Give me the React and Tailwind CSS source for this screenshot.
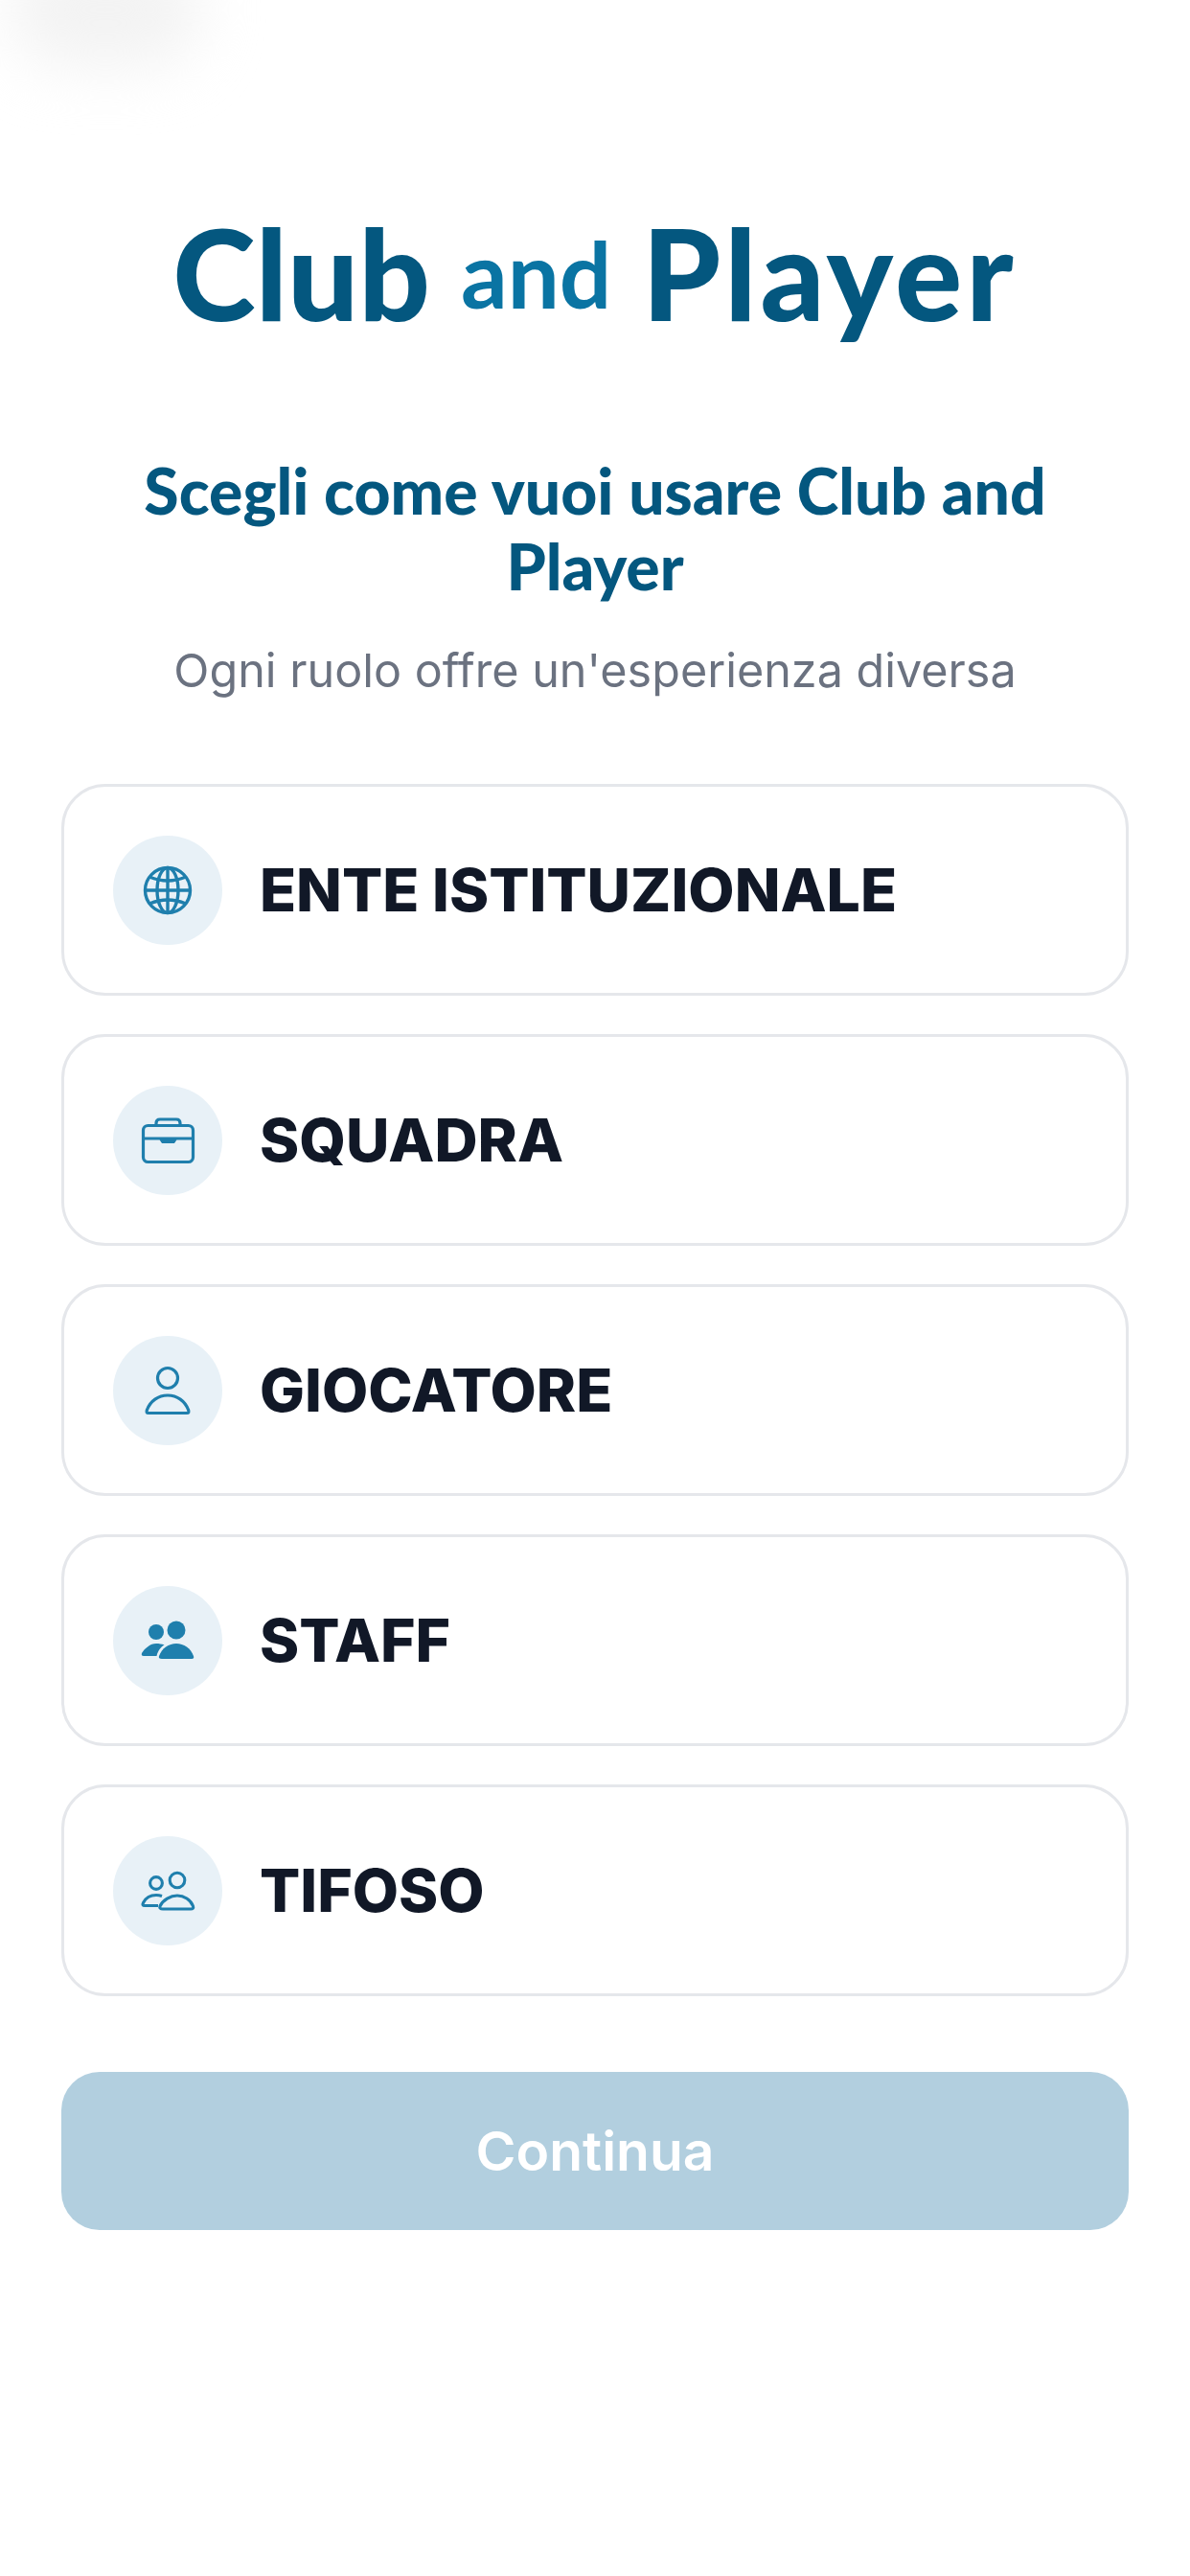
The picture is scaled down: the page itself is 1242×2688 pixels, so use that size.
const BLUE = "#1f7fad";

const GlobeIcon = () => (
  <svg viewBox="-30 -30 60 60" className="w-[60px] h-[60px]" fill="none" stroke={BLUE} strokeWidth="3.4">
    <circle cx="0" cy="0" r="23.5" />
    <ellipse cx="0" cy="0" rx="11" ry="23.5" />
    <path d="M0 -23.5V23.5M-23.5 0H23.5" />
    <path d="M-19 -14Q0 -6 19 -14M-19 14Q0 6 19 14" />
  </svg>
);

const BriefcaseIcon = () => (
  <svg viewBox="-30 -30 60 60" className="w-[60px] h-[60px]" fill="none" stroke={BLUE} strokeWidth="3.2">
    <rect x="-25.5" y="-15.5" width="52" height="38" rx="5" />
    <path d="M-12 -15.5V-18Q-12 -22 -8 -22H9Q13 -22 13 -18V-15.5" />
    <path d="M-25.5 -2H26.5" />
    <path d="M-8 -1H9L7 2.5H-6Z" fill={BLUE} strokeWidth="1" />
  </svg>
);

const UserIcon = () => (
  <svg viewBox="-30 -30 60 60" className="w-[60px] h-[60px]" fill="none" stroke={BLUE} strokeWidth="3.2">
    <circle cx="0" cy="-13" r="10.5" />
    <path d="M-20 23.5H20Q23 23.5 21.5 20C18 11 10 5 0 5C-10 5 -18 11 -21.5 20Q-23 23.5 -20 23.5Z" />
  </svg>
);

const StaffIcon = () => (
  <svg viewBox="-30 -30 60 60" className="w-[60px] h-[60px]" fill={BLUE}>
    <circle cx="9" cy="-11" r="9.5" />
    <circle cx="-12" cy="-9" r="8" />
    <path d="M-6 19H25Q28 19 27 16C24 8 17 3 9 3C1 3 -6 8 -9 16Q-10 19 -6 19Z" />
    <path d="M-25 16H-11.5C-10 10 -7 6.5 -3.5 4.5C-6 3.5 -9 3 -12 3C-18 3 -24 8 -27 13Q-28 16 -25 16Z" />
  </svg>
);

const FansIcon = () => (
  <svg viewBox="-30 -30 60 60" className="w-[60px] h-[60px]" fill="none" stroke={BLUE} strokeWidth="3.1">
    <circle cx="10" cy="-11" r="7.8" />
    <circle cx="-12" cy="-8" r="6.4" />
    <path d="M-5 19H24Q27.5 19 26.5 16C24 9.5 17 5 10 5C3 5 -5 9.5 -8 16Q-9 19 -5 19Z" />
    <path d="M-10 15.5H-24Q-27 15.5 -25.5 12.5C-23 7.5 -18 4.5 -12 4.5Q-9 4.5 -6 5.5" />
  </svg>
);

const roles = [
  { label: "ENTE ISTITUZIONALE", icon: <GlobeIcon /> },
  { label: "SQUADRA", icon: <BriefcaseIcon /> },
  { label: "GIOCATORE", icon: <UserIcon /> },
  { label: "STAFF", icon: <StaffIcon /> },
  { label: "TIFOSO", icon: <FansIcon /> },
];

const App = () => {
  return (
    <div className="relative w-[1242px] h-[2688px] bg-white overflow-hidden px-[64px] pt-[220px] font-['Inter',sans-serif]">
      {/* faint smudge in the top left corner */}
      <div className="absolute left-[10px] -top-[50px] w-[200px] h-[120px] rounded-full bg-[#f3f3f3] blur-[30px]" />

      <div className="relative flex items-baseline justify-center font-['Lato',sans-serif] text-[#04577f] font-black">
        <span className="text-[131px] leading-[130px]">Club</span>
        <span className="text-[96px] leading-[130px] text-[#0a74a3] font-bold mx-[32px] -translate-y-[13px]">and</span>
        <span className="text-[131px] leading-[130px] tracking-[4px]">Player</span>
      </div>

      <h1 className="mt-[109px] mx-auto w-[1000px] text-center font-['Lato',sans-serif] font-black text-[66px] leading-[79px] text-[#04577f]">
        Scegli come vuoi usare Club and Player
      </h1>
      <p className="mt-[40px] text-center text-[48.5px] leading-[60px] text-[#6b7280]">
        Ogni ruolo offre un'esperienza diversa
      </p>

      <div className="mt-[88px] flex flex-col gap-[40px]">
        {roles.map((role) => (
          <div
            key={role.label}
            className="h-[221px] flex items-center gap-[39px] pl-[51px] bg-white border-[3px] border-[#e5e7eb] rounded-[46px]"
          >
            <div className="w-[114px] h-[114px] rounded-full bg-[#e8f1f7] flex items-center justify-center">
              {role.icon}
            </div>
            <span className="text-[62.5px] font-extrabold text-[#111827]">{role.label}</span>
          </div>
        ))}
      </div>

      <button className="mt-[79px] w-full h-[165px] rounded-[40px] bg-[#b2cfdf] text-white text-[57px] font-semibold">
        Continua
      </button>
    </div>
  );
};

export default App;
